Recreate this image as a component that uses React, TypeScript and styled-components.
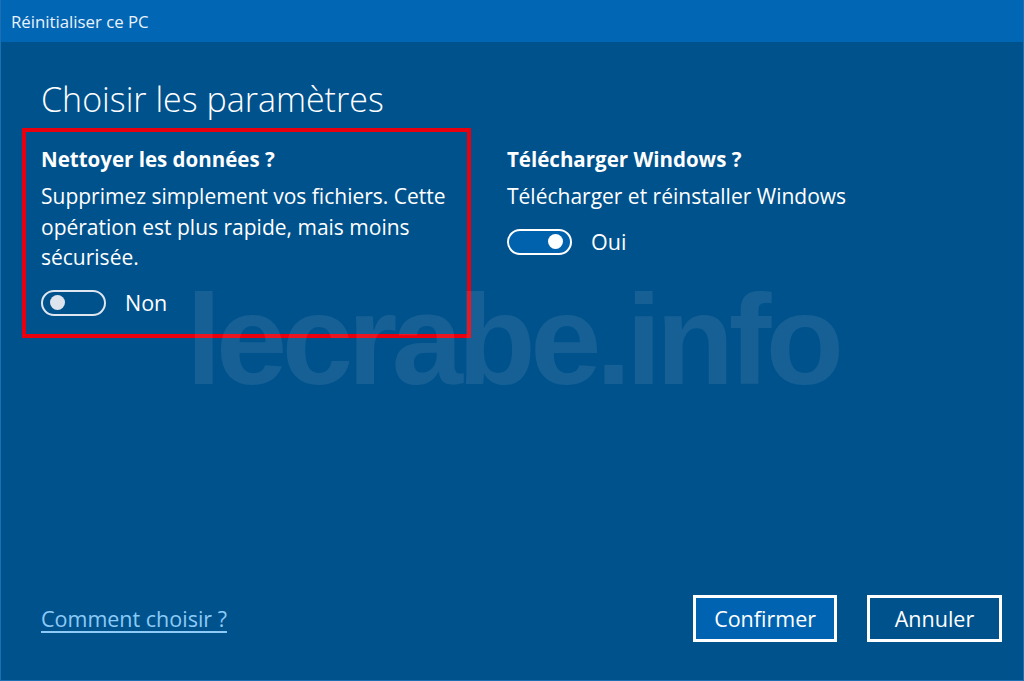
import React, { useState } from "react";
import styled, { createGlobalStyle } from "styled-components";

const GlobalStyle = createGlobalStyle`
  html, body {
    margin: 0;
    padding: 0;
    width: 1024px;
    height: 681px;
    overflow: hidden;
    background: #00528c;
  }
  * { box-sizing: border-box; }
`;

const FONT = `"Open Sans", "Noto Sans", "Liberation Sans", sans-serif`;

const Window = styled.div`
  position: relative;
  width: 1024px;
  height: 681px;
  display: flex;
  flex-direction: column;
  background: #00528c;
  border: 1px solid #1c6fb3;
  border-top: none;
  font-family: ${FONT};
  color: #ffffff;
  overflow: hidden;
`;

const TitleBar = styled.div`
  height: 42px;
  flex: none;
  display: flex;
  align-items: center;
  padding-left: 10px;
  background: #0166b4;
  font-size: 16.8px;
  color: #eaf2fb;
`;

const Body = styled.div`
  position: relative;
  flex: 1;
  display: flex;
  flex-direction: column;
  padding: 0 21px 38px 21px;
`;

const Heading = styled.h1`
  margin: 35px 0 0 19px;
  font-size: 34px;
  font-weight: 300;
  line-height: 44px;
`;

const Options = styled.div`
  display: grid;
  grid-template-columns: 449px 1fr;
  column-gap: 17px;
  margin-top: 7px;
  align-items: start;
`;

const Option = styled.section<{ $highlight?: boolean }>`
  display: flex;
  flex-direction: column;
  padding: 13px 6px 17px 15px;
  border: 4px solid ${(p) => (p.$highlight ? "#e8000e" : "transparent")};
`;

const OptionTitle = styled.h2`
  margin: 0;
  font-size: 20.5px;
  font-weight: 700;
  line-height: 28px;
`;

const OptionText = styled.p`
  margin: 8px 0 0 0;
  font-size: 21px;
  line-height: 30.5px;
  font-weight: 400;
`;

const ToggleRow = styled.div`
  display: flex;
  align-items: center;
  gap: 19px;
  margin-top: 16px;
`;

const ToggleTrack = styled.button<{ $on: boolean }>`
  width: 65px;
  height: 26px;
  border-radius: 13px;
  border: 2.5px solid ${(p) => (p.$on ? "#ffffff" : "#dfe6ef")};
  background: ${(p) => (p.$on ? "#0062ad" : "transparent")};
  cursor: pointer;
  display: flex;
  align-items: center;
  justify-content: ${(p) => (p.$on ? "flex-end" : "flex-start")};
  padding: 0 7px;
`;

const ToggleKnob = styled.span<{ $on: boolean }>`
  width: 15px;
  height: 15px;
  border-radius: 50%;
  background: ${(p) => (p.$on ? "#ffffff" : "#dde4ed")};
`;

const ToggleLabel = styled.span`
  font-size: 21.5px;
  line-height: 28px;
`;

const Footer = styled.div`
  margin-top: auto;
  display: flex;
  align-items: center;
  justify-content: space-between;
  padding-left: 19px;
`;

const HelpLink = styled.a`
  font-size: 21.5px;
  color: #8ccaf7;
  text-decoration: underline;
  text-underline-offset: 4px;
  text-decoration-thickness: 1.5px;
  cursor: pointer;
`;

const Buttons = styled.div`
  display: flex;
  gap: 30px;
`;

const Button = styled.button<{ $primary?: boolean }>`
  min-width: 135px;
  height: 47px;
  padding: 0 18px;
  border: 3px solid #ffffff;
  background: ${(p) => (p.$primary ? "#0063b1" : "#00528c")};
  color: #ffffff;
  font-family: ${FONT};
  font-size: 21.5px;
  cursor: pointer;
`;

const Watermark = styled.div`
  position: absolute;
  left: 185px;
  top: 234px;
  font-family: "Liberation Sans", Arial, sans-serif;
  font-weight: 700;
  font-size: 128px;
  letter-spacing: -5.5px;
  line-height: 1;
  color: rgba(255, 255, 255, 0.085);
  pointer-events: none;
  user-select: none;
`;

function Toggle({ on, onChange, label }: { on: boolean; onChange: () => void; label: string }) {
  return (
    <ToggleRow>
      <ToggleTrack $on={on} onClick={onChange} aria-pressed={on}>
        <ToggleKnob $on={on} />
      </ToggleTrack>
      <ToggleLabel>{label}</ToggleLabel>
    </ToggleRow>
  );
}

export default function App() {
  const [clean, setClean] = useState(false);
  const [download, setDownload] = useState(true);
  return (
    <>
      <GlobalStyle />
      <Window>
        <TitleBar>Réinitialiser ce PC</TitleBar>
        <Body>
          <Heading>Choisir les paramètres</Heading>
          <Options>
            <Option $highlight>
              <OptionTitle>Nettoyer les données ?</OptionTitle>
              <OptionText>
                Supprimez simplement vos fichiers. Cette opération est plus rapide, mais moins
                sécurisée.
              </OptionText>
              <Toggle on={clean} onChange={() => setClean(!clean)} label={clean ? "Oui" : "Non"} />
            </Option>
            <Option>
              <OptionTitle>Télécharger Windows ?</OptionTitle>
              <OptionText>Télécharger et réinstaller Windows</OptionText>
              <Toggle
                on={download}
                onChange={() => setDownload(!download)}
                label={download ? "Oui" : "Non"}
              />
            </Option>
          </Options>
          <Footer>
            <HelpLink>Comment choisir ?</HelpLink>
            <Buttons>
              <Button $primary>Confirmer</Button>
              <Button>Annuler</Button>
            </Buttons>
          </Footer>
          <Watermark>lecrabe.info</Watermark>
        </Body>
      </Window>
    </>
  );
}
